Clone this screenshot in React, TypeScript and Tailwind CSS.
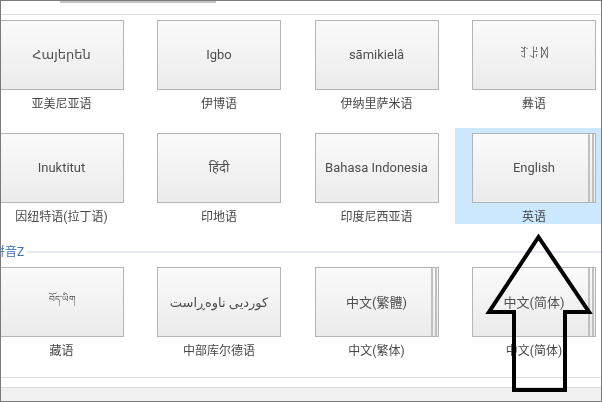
import React from 'react';

const FONT = 'Roboto, "Noto Sans", "DejaVu Sans", "Noto Sans CJK SC", sans-serif';

interface Lang {
  name: string;
  label: string;
  stacked?: boolean;
  selected?: boolean;
  nameClass?: string;
}

const row1: Lang[] = [
  { name: 'Հայերեն', label: '亚美尼亚语' },
  { name: 'Igbo', label: '伊博语' },
  { name: 'sāmikielâ', label: '伊纳里萨米语' },
  { name: 'ꆈꌠꉙ', label: '彝语', nameClass: 'text-[13px] pb-[2px]' },
];

const row2: Lang[] = [
  { name: 'Inuktitut', label: '因纽特语(拉丁语)' },
  { name: 'हिंदी', label: '印地语' },
  { name: 'Bahasa Indonesia', label: '印度尼西亚语' },
  { name: 'English', label: '英语', stacked: true, selected: true },
];

const row3: Lang[] = [
  { name: 'བོད་ཡིག', label: '藏语', nameClass: 'text-[9px] pb-[4px]' },
  { name: 'کوردیی ناوەڕاست', label: '中部库尔德语', nameClass: 'text-[13px] pt-[2px]' },
  { name: '中文(繁體)', label: '中文(繁体)', stacked: true, nameClass: 'text-[13px] pt-[2px]' },
  { name: '中文(简体)', label: '中文(简体)', stacked: true, nameClass: 'text-[13px] pt-[2px]' },
];

function LangCell({ lang }: { lang: Lang }) {
  return (
    <div className={`h-[96px] pt-[5px] pl-[17px] pr-[6px] ${lang.selected ? 'bg-[#cce8ff]' : ''}`}>
      <div className="h-[70px] flex border border-[#b4b4b4] bg-gradient-to-b from-[#fafafa] to-[#ebebeb]">
        <div className={`flex-1 min-w-0 ${lang.stacked ? 'pl-[7px]' : ''}`}>
          <div
            className={`h-full flex items-center justify-center text-[#4f4f4f] whitespace-nowrap ${
              lang.nameClass ?? 'text-[13px]'
            }`}
          >
            {lang.name}
          </div>
        </div>
        {lang.stacked && (
          <>
            <div className="w-[4px] border-l-2 border-[#c0c0c0]" />
            <div className="w-[3px] border-l-2 border-[#c0c0c0]" />
          </>
        )}
      </div>
      <div className="h-[21px] pt-[7px] flex items-center justify-center text-[12px] text-[#474747] whitespace-nowrap">
        {lang.label}
      </div>
    </div>
  );
}

function LangRow({ langs }: { langs: Lang[] }) {
  return (
    <div className="-ml-[18.5px] grid grid-cols-[147px_147px_147px_147px] gap-x-[10.5px]">
      {langs.map((l) => (
        <LangCell key={l.label} lang={l} />
      ))}
    </div>
  );
}

export default function App() {
  return (
    <div
      className="relative w-[602px] h-[402px] bg-white overflow-hidden border border-[#7a7a7a] blur-[0.35px]"
      style={{ fontFamily: FONT }}
    >
      <div className="h-[2px] w-[156px] ml-[59px] bg-[#c4c4c4]" />
      <div className="h-[11px]" />
      <div className="h-[1px] bg-[#dcdcdc]" />
      <LangRow langs={row1} />
      <div className="h-[17px]" />
      <LangRow langs={row2} />
      <div className="h-[38px] flex items-end">
        <div className="h-[20px] -ml-[8px] flex items-center gap-[3px] flex-1 text-[12px] text-[#3a6fc0] whitespace-nowrap">
          <span>拼音Z</span>
          <div className="flex-1 h-[2px] bg-[#e6e9f0]" />
        </div>
      </div>
      <LangRow langs={row3} />
      <div className="h-[20px] border-b border-[#dcdcdc]" />
      <div className="h-[9px]" />
      <div className="h-[15px] border-t border-[#dcdcdc] bg-[#f0f0f0]" />

      {/* annotation arrow */}
      <svg className="absolute left-[-1px] top-[-1px]" width="602" height="402" viewBox="0 0 602 402">
        <polygon
          points="538.5,237 589,312 565,312 565,390 514,390 514,312 489,312"
          fill="none"
          stroke="#000000"
          strokeWidth="4"
          strokeLinejoin="miter"
        />
      </svg>
    </div>
  );
}
